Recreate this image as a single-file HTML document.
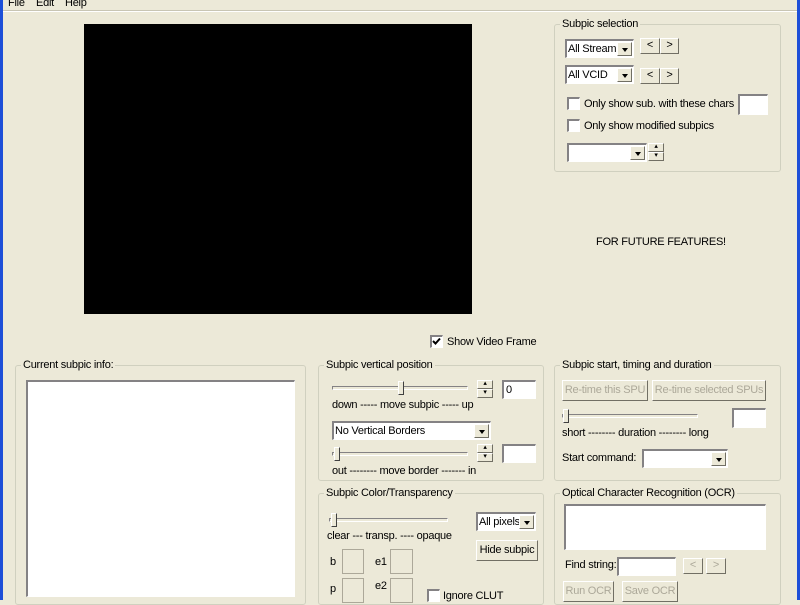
<!DOCTYPE html>
<html><head><style>
*{box-sizing:border-box;margin:0;padding:0}
body{width:800px;height:600px;overflow:hidden;background:#ECE9D8;font-family:"Liberation Sans",sans-serif;font-size:11px;letter-spacing:-0.25px;color:#000;position:relative}
.a{position:absolute}
.t{position:absolute;white-space:nowrap;line-height:12px}
.g{position:absolute;border:1px solid #d0d0bf;border-radius:3px}
.gl{position:absolute;background:#ECE9D8;padding:0 2px;white-space:nowrap;line-height:12px}
.in{position:absolute;background:#fff;border-top:2px solid #848284;border-left:2px solid #848284;border-right:1px solid #fff;border-bottom:1px solid #fff;overflow:hidden}
.btn{position:absolute;border:1px solid #fff;border-right-color:#716f64;border-bottom-color:#716f64;background:#ECE9D8;text-align:center;line-height:16px;white-space:nowrap;font-size:11px;overflow:hidden}
.dis{color:#aca899}
.dd{position:absolute;right:1px;top:1px;bottom:1px;width:15px;background:#ECE9D8;border:1px solid #fff;border-right-color:#716f64;border-bottom-color:#716f64}
.dd:after{content:"";position:absolute;left:4px;top:5px;border:3px solid transparent;border-top:4px solid #000}
.cb{position:absolute;width:13px;height:13px;background:#fff;border-top:2px solid #848284;border-left:2px solid #848284;border-right:1px solid #fff;border-bottom:1px solid #fff}
.trk{position:absolute;height:4px;border-top:1px solid #848284;border-left:1px solid #848284;border-bottom:1px solid #fff;border-right:1px solid #fff}
.th{position:absolute;width:6px;height:14px;background:#ECE9D8;border:1px solid #fff;border-right-color:#404040;border-bottom-color:#404040}
.sp{position:absolute;width:16px;height:18px}
.sp div{position:absolute;left:0;width:16px;height:9px;border:1px solid #fff;border-right-color:#716f64;border-bottom-color:#716f64;background:#ECE9D8;font-size:7px;line-height:6px;text-align:center}
</style></head><body>
<div class="a" style="left:0;top:0;width:3px;height:600px;background:#1d4fd8"></div>
<div class="a" style="right:0;top:0;width:3px;height:600px;background:#1d4fd8"></div>
<div class="t" style="left:8px;top:-3px">File</div>
<div class="t" style="left:36px;top:-3px">Edit</div>
<div class="t" style="left:65px;top:-3px">Help</div>
<div class="a" style="left:3px;top:11px;width:794px;height:1px;background:#fff"></div>
<div class="a" style="left:3px;top:10px;width:794px;height:1px;background:#c8c5b4"></div>

<div class="a" style="left:84px;top:24px;width:388px;height:290px;background:#000"></div>
<div class="cb" style="left:430px;top:335px"></div>
<svg class="a" style="left:432px;top:337px" width="9" height="9"><path d="M1 4 L3.5 6.5 L8 1.5" stroke="#000" stroke-width="2" fill="none"/></svg>
<div class="t" style="left:447px;top:336px">Show Video Frame</div>

<div class="g" style="left:554px;top:24px;width:227px;height:148px"></div>
<div class="gl" style="left:560px;top:18px">Subpic selection</div>
<div class="in" style="left:565px;top:39px;width:69px;height:19px"><span class="t" style="left:1px;top:2px">All Stream</span><div class="dd"></div></div>
<div class="btn" style="left:640px;top:38px;width:20px;height:16px;line-height:13px">&lt;</div>
<div class="btn" style="left:660px;top:38px;width:19px;height:16px;line-height:13px">&gt;</div>
<div class="in" style="left:565px;top:65px;width:69px;height:19px"><span class="t" style="left:1px;top:2px">All VCID</span><div class="dd"></div></div>
<div class="btn" style="left:640px;top:68px;width:20px;height:16px;line-height:13px">&lt;</div>
<div class="btn" style="left:660px;top:68px;width:19px;height:16px;line-height:13px">&gt;</div>
<div class="cb" style="left:567px;top:97px"></div>
<div class="t" style="left:584px;top:98px">Only show sub. with these chars</div>
<div class="in" style="left:738px;top:94px;width:30px;height:21px"></div>
<div class="cb" style="left:567px;top:119px"></div>
<div class="t" style="left:584px;top:120px">Only show modified subpics</div>
<div class="in" style="left:567px;top:143px;width:80px;height:19px"><div class="dd"></div></div>
<div class="sp" style="left:648px;top:143px"><div style="top:0">▴</div><div style="top:9px">▾</div></div>
<div class="t" style="left:596px;top:236px">FOR FUTURE FEATURES!</div>

<div class="g" style="left:15px;top:365px;width:291px;height:240px"></div>
<div class="gl" style="left:21px;top:359px">Current subpic info:</div>
<div class="in" style="left:26px;top:380px;width:269px;height:217px"></div>

<div class="g" style="left:318px;top:365px;width:226px;height:116px"></div>
<div class="gl" style="left:324px;top:359px">Subpic vertical position</div>
<div class="trk" style="left:332px;top:386px;width:136px"></div>
<div class="th" style="left:398px;top:381px"></div>
<div class="sp" style="left:477px;top:380px"><div style="top:0">▴</div><div style="top:9px">▾</div></div>
<div class="in" style="left:502px;top:380px;width:34px;height:19px"><span class="t" style="left:2px;top:2px">0</span></div>
<div class="t" style="left:332px;top:399px">down ----- move subpic ----- up</div>
<div class="in" style="left:332px;top:421px;width:159px;height:19px"><span class="t" style="left:1px;top:2px">No Vertical Borders</span><div class="dd"></div></div>
<div class="trk" style="left:332px;top:452px;width:136px"></div>
<div class="th" style="left:334px;top:447px"></div>
<div class="sp" style="left:477px;top:444px"><div style="top:0">▴</div><div style="top:9px">▾</div></div>
<div class="in" style="left:502px;top:444px;width:34px;height:19px"></div>
<div class="t" style="left:332px;top:465px">out -------- move border ------- in</div>

<div class="g" style="left:318px;top:493px;width:226px;height:112px"></div>
<div class="gl" style="left:324px;top:487px">Subpic Color/Transparency</div>
<div class="trk" style="left:329px;top:518px;width:119px"></div>
<div class="th" style="left:331px;top:513px"></div>
<div class="t" style="left:327px;top:530px">clear --- transp. ---- opaque</div>
<div class="in" style="left:476px;top:512px;width:60px;height:19px"><span class="t" style="left:1px;top:2px">All pixels</span><div class="dd"></div></div>
<div class="btn" style="left:476px;top:540px;width:62px;height:21px;line-height:19px">Hide subpic</div>
<div class="t" style="left:330px;top:556px">b</div>
<div class="g" style="left:342px;top:549px;width:22px;height:25px;border-color:#aca899;border-radius:0"></div>
<div class="t" style="left:375px;top:556px">e1</div>
<div class="g" style="left:390px;top:549px;width:23px;height:25px;border-color:#aca899;border-radius:0"></div>
<div class="t" style="left:330px;top:583px">p</div>
<div class="g" style="left:342px;top:578px;width:22px;height:25px;border-color:#aca899;border-radius:0"></div>
<div class="t" style="left:375px;top:580px">e2</div>
<div class="g" style="left:390px;top:578px;width:23px;height:25px;border-color:#aca899;border-radius:0"></div>
<div class="cb" style="left:427px;top:589px"></div>
<div class="t" style="left:443px;top:590px">Ignore CLUT</div>

<div class="g" style="left:554px;top:365px;width:227px;height:116px"></div>
<div class="gl" style="left:560px;top:359px">Subpic start, timing and duration</div>
<div class="btn dis" style="left:562px;top:380px;width:86px;height:21px;line-height:19px">Re-time this SPU</div>
<div class="btn dis" style="left:652px;top:380px;width:114px;height:21px;line-height:19px">Re-time selected SPUs</div>
<div class="trk" style="left:562px;top:414px;width:136px"></div>
<div class="th" style="left:563px;top:409px"></div>
<div class="in" style="left:732px;top:408px;width:34px;height:20px"></div>
<div class="t" style="left:562px;top:427px">short -------- duration -------- long</div>
<div class="t" style="left:562px;top:452px">Start command:</div>
<div class="in" style="left:642px;top:449px;width:86px;height:19px"><div class="dd"></div></div>

<div class="g" style="left:554px;top:493px;width:227px;height:112px"></div>
<div class="gl" style="left:560px;top:487px">Optical Character Recognition (OCR)</div>
<div class="in" style="left:564px;top:504px;width:202px;height:46px"></div>
<div class="t" style="left:565px;top:559px">Find string:</div>
<div class="in" style="left:617px;top:557px;width:59px;height:19px"></div>
<div class="btn dis" style="left:683px;top:558px;width:20px;height:16px;line-height:13px">&lt;</div>
<div class="btn dis" style="left:706px;top:558px;width:20px;height:16px;line-height:13px">&gt;</div>
<div class="btn dis" style="left:563px;top:581px;width:51px;height:21px;line-height:19px">Run OCR</div>
<div class="btn dis" style="left:622px;top:581px;width:56px;height:21px;line-height:19px">Save OCR</div>
</body></html>
